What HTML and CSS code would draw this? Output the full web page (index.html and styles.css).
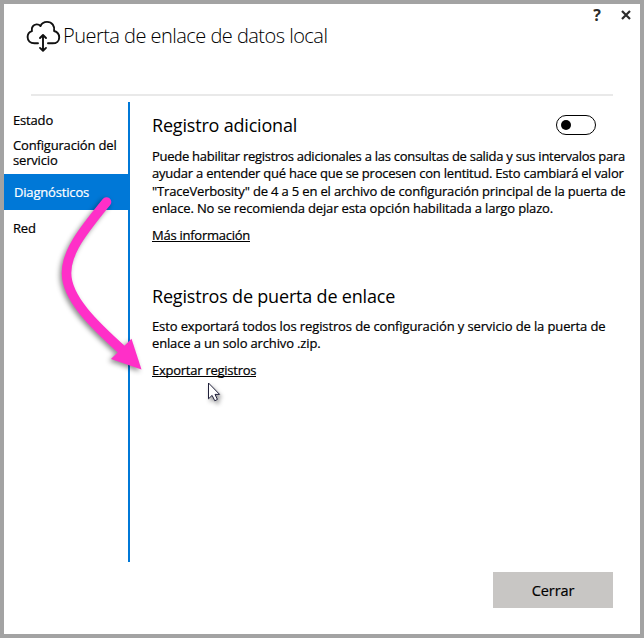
FILE: index.html
```html
<!DOCTYPE html>
<html lang="es">
<head>
<meta charset="utf-8">
<title>Puerta de enlace de datos local</title>
<link rel="stylesheet" href="styles.css">
</head>
<body>
<main class="window">
  <header class="header">
    <svg class="cloud" width="36" height="34" viewBox="0 0 36 34" fill="none" stroke="#111" stroke-width="1.9" stroke-linecap="round" stroke-linejoin="round">
      <path d="M13 24.3H9.5C5.2 24.3 2.6 21.6 2.6 18.1C2.6 15.2 4.2 12.9 6.9 12.1C6.1 8.2 8.4 5.6 11.5 5.4C13.1 5.3 14.4 5.8 15.5 7C16.7 4.3 18.8 2.9 22 2.9C27.1 2.9 30 7 29.1 12C32.4 13 34.2 15.4 34.2 18.4C34.2 22 31.6 24.3 27.6 24.3H23"/>
      <path d="M18 17.3V31.2M15 19L18 16L21 19M15 28.9L18 31.8L21 28.9"/>
    </svg>
    <h1 class="title">Puerta de enlace de datos local</h1>
    <div class="controls">
      <button class="control help" aria-label="Ayuda">?</button>
      <button class="control" aria-label="Cerrar ventana"><svg width="10" height="10" viewBox="0 0 10 10" stroke="#2b2b2b" stroke-width="2.2"><path d="M1 1L9 9M9 1L1 9"/></svg></button>
    </div>
  </header>
  <div class="body">
    <nav class="nav">
      <a class="item estado">Estado</a>
      <a class="item config">Configuración del<br>servicio</a>
      <a class="item active">Diagnósticos</a>
      <a class="item red">Red</a>
    </nav>
    <div class="content">
      <section class="logging">
        <div class="heading"><h2 class="h-a">Registro adicional</h2><span class="toggle" role="switch" aria-checked="false"></span></div>
        <p class="text"><span class="line a1">Puede habilitar registros adicionales a las consultas de salida y sus intervalos para</span> <span class="line a2">ayudar a entender qué hace que se procesen con lentitud. Esto cambiará el valor</span> <span class="line a3">"TraceVerbosity" de 4 a 5 en el archivo de configuración principal de la puerta de</span> <span class="line a4">enlace. No se recomienda dejar esta opción habilitada a largo plazo.</span></p>
        <a class="link more">Más información</a>
      </section>
      <section class="logs">
        <h2 class="h-b">Registros de puerta de enlace</h2>
        <p class="text"><span class="line b1">Esto exportará todos los registros de configuración y servicio de la puerta de</span> <span class="line b2">enlace a un solo archivo .zip.</span></p>
        <a class="link export">Exportar registros</a>
      </section>
    </div>
  </div>
  <footer class="footer"><button class="close">Cerrar</button></footer>
  <svg class="overlay" width="644" height="638" viewBox="0 0 644 638">
    <g class="arrow">
      <path d="M106.5 202C82 232 66.5 252 66.5 273C66.5 298 93 324 125 352.5" fill="none" stroke="#ff2fc8" stroke-width="9.6" stroke-linecap="round"/>
      <path d="M141.5 369.5L111 359L131.5 338.7Z" fill="#ff2fc8"/>
    </g>
    <path class="cursor" d="M208.5 383V398.8L212.1 395.4L214.8 400.8L217.4 399.4L215 394.4H219.6Z" fill="#fff" stroke="#20203a" stroke-width="1"/>
  </svg>
</main>
</body>
</html>
```
FILE: styles.css
```css
* { box-sizing: border-box; }
body { margin: 0; font-family: "Open Sans", "Noto Sans", sans-serif; color: #000; }
h1, h2, p { margin: 0; }
button { border: 0; padding: 0; font: inherit; background: none; color: inherit; }
.window {
  position: relative;
  display: flex;
  flex-direction: column;
  width: 644px;
  height: 638px;
  border: 4px solid #a3a3a3;
  background: #fff;
}
.header {
  display: flex;
  align-items: flex-start;
  height: 92px;
  margin: 0 5px 0 27px;
  padding: 15px 0 0 0;
  position: relative;
}
.header::after {
  content: "";
  position: absolute;
  left: 0;
  right: 22px;
  bottom: 0;
  height: 2px;
  background: #e9e9e9;
}
.cloud { flex: none; margin: 0 0 0 -6px; }
.title { margin-left: 2px; font-size: 20px; line-height: 34px; font-weight: 300; letter-spacing: -.53px; white-space: nowrap; }
.controls { display: flex; align-items: center; gap: 20px; height: 14px; margin: -11px 4px 0 auto; color: #2b2b2b; }
.control { display: flex; font-size: 16px; line-height: 14px; font-weight: 700; }
.body { display: flex; height: 460px; margin-top: 6px; }
.nav { display: flex; flex: none; flex-direction: column; width: 126px; padding-top: 9px; border-right: 2px solid #0078d7; font-size: 13px; line-height: 15px; letter-spacing: -.17px; }
.nav, .text, .link, .close { -webkit-text-stroke: .2px; }
.item { display: block; padding-left: 9px; white-space: nowrap; }
.estado { margin-bottom: 9px; line-height: 18px; }
.active { height: 36px; margin-top: 6px; padding-left: 10px; line-height: 36px; background: #0078d7; color: #fff; }
.red { margin-top: 9px; line-height: 18px; }
.content { flex: 1; min-width: 0; padding-left: 22px; }
.heading { display: flex; justify-content: space-between; align-items: center; height: 26px; margin-top: 10px; padding-right: 44px; }
h2 { width: max-content; font-size: 18px; line-height: 26px; font-weight: 400; letter-spacing: -.19px; white-space: nowrap; }
.toggle { display: flex; align-items: center; width: 40px; height: 20px; padding-left: 4px; border: 1.4px solid #000; border-radius: 10px; }
.toggle::before { content: ""; width: 10px; height: 10px; border-radius: 50%; background: #000; }
.text { margin-top: 10px; font-size: 13px; line-height: 17.4px; }
.line { display: block; width: max-content; white-space: nowrap; }
.a1 { letter-spacing: -.27px; }
.a2 { letter-spacing: -.225px; }
.a3 { letter-spacing: -.165px; }
.a4 { letter-spacing: -.15px; }
.b1 { letter-spacing: -.115px; }
.b2 { letter-spacing: -.15px; }
.link { display: block; width: max-content; height: 16px; margin-top: 8px; border-bottom: 1px solid #000; font-size: 13px; line-height: 18px; letter-spacing: -.25px; }
.logs { margin-top: 41px; }
.logs .text { margin-top: 9px; }
.logs .link { margin-top: 9px; }
.footer { display: flex; justify-content: flex-end; margin: 10px 27px 0; }
.close { width: 120px; height: 36px; background: #c8c6c4; font-size: 14.5px; letter-spacing: -.1px; }
.overlay { position: absolute; left: -4px; top: -4px; pointer-events: none; }
.arrow { filter: drop-shadow(-2px 2px 2.5px rgba(0, 0, 0, .45)); }
.cursor { filter: drop-shadow(2px 3px 2px rgba(0, 0, 0, .4)); }
```
